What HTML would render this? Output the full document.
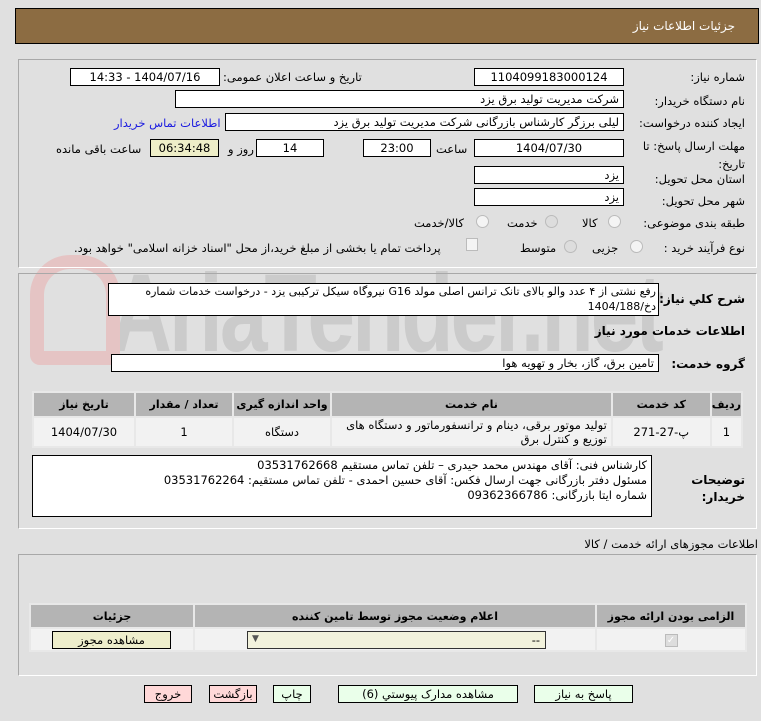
<!DOCTYPE html>
<html><head><meta charset="utf-8"><style>
*{box-sizing:border-box;margin:0;padding:0}
body{width:761px;height:721px;background:#e0e0e0;position:relative;overflow:hidden;font-family:"DejaVu Sans","Liberation Sans",sans-serif;font-size:11.5px;color:#000}
.a{position:absolute;white-space:nowrap}
.box{position:absolute;background:#fff;border:1px solid #000;direction:rtl;padding:0 4px;line-height:16px;overflow:hidden}
.c{text-align:center}
.l{direction:rtl}
.panel{position:absolute;left:18px;width:739px;border:1px solid #a8a8a8;border-right-color:#fff;border-bottom-color:#fff}
.b{font-weight:bold}
.rad{position:absolute;width:13px;height:13px;border-radius:50%;border:1px solid #bbb;background:#f4f4f4}
table{position:absolute;border-collapse:collapse;direction:rtl}
td,th{border:2px solid #e8e8e8;text-align:center}
th{background:#b4b4b4;font-weight:bold;font-size:11px}
td{background:#f2f2f2}
.btn{position:absolute;border:1px solid #000;background:#eaffea;text-align:center;line-height:16px;height:18px}
.pk{background:#ffd8d8}
</style></head><body>
<div class="a" style="left:15px;top:8px;width:744px;height:36px;background:#8c6c42;border:1px solid #000"></div>
<div class="a" style="right:26px;top:19px;color:#fff;font-size:12px">جزئیات اطلاعات نیاز</div>

<div class="a" style="left:110px;top:250px;font-size:110px;font-weight:bold;color:#cbcbcb;font-family:'Liberation Sans',sans-serif;letter-spacing:-4px;transform:scaleX(0.78);transform-origin:left">AriaTender.net</div>
<div class="a" style="left:30px;top:255px;width:90px;height:110px;border:14px solid #e5c4c4;border-radius:40px 40px 10px 10px"></div>

<div class="panel" style="top:59px;height:209px"></div>
<div class="a l" style="right:16px;top:70px">شماره نیاز:</div>
<div class="box c" style="left:474px;top:68px;width:150px;height:18px">1104099183000124</div>
<div class="a l" style="left:223px;top:70px">تاریخ و ساعت اعلان عمومی:</div>
<div class="box c" style="left:70px;top:68px;width:150px;height:18px">1404/07/16 - 14:33</div>
<div class="a l" style="right:16px;top:94px">نام دستگاه خریدار:</div>
<div class="box" style="left:175px;top:90px;width:449px;height:18px">شرکت مدیریت تولید برق یزد</div>
<div class="a l" style="right:16px;top:116px">ایجاد کننده درخواست:</div>
<div class="box" style="left:225px;top:113px;width:399px;height:18px">لیلی برزگر کارشناس بازرگانی شرکت مدیریت تولید برق یزد</div>
<div class="a l" style="left:114px;top:116px;color:#1a1ae0">اطلاعات تماس خریدار</div>
<div class="a l" style="right:16px;top:139px">مهلت ارسال پاسخ: تا</div>
<div class="a l" style="right:16px;top:157px">تاریخ:</div>
<div class="box c" style="left:474px;top:139px;width:150px;height:18px">1404/07/30</div>
<div class="a l" style="left:436px;top:142px">ساعت</div>
<div class="box c" style="left:363px;top:139px;width:68px;height:18px">23:00</div>
<div class="box c" style="left:256px;top:139px;width:68px;height:18px">14</div>
<div class="a l" style="left:228px;top:142px">روز و</div>
<div class="box c" style="left:150px;top:139px;width:69px;height:18px;background:#eeeec8">06:34:48</div>
<div class="a l" style="left:56px;top:142px">ساعت باقی مانده</div>
<div class="a l" style="right:16px;top:172px">استان محل تحویل:</div>
<div class="box" style="left:474px;top:166px;width:150px;height:18px">یزد</div>
<div class="a l" style="right:16px;top:194px">شهر محل تحویل:</div>
<div class="box" style="left:474px;top:188px;width:150px;height:18px">یزد</div>
<div class="a l" style="right:16px;top:216px">طبقه بندی موضوعی:</div>
<div class="rad" style="left:608px;top:215px"></div><div class="a" style="left:582px;top:216px">کالا</div>
<div class="rad" style="left:545px;top:215px;background:#ddd"></div><div class="a" style="left:507px;top:216px">خدمت</div>
<div class="rad" style="left:476px;top:215px"></div><div class="a" style="left:414px;top:216px">کالا/خدمت</div>
<div class="a l" style="right:16px;top:241px">نوع فرآیند خرید :</div>
<div class="rad" style="left:630px;top:240px"></div><div class="a" style="left:592px;top:241px">جزیی</div>
<div class="rad" style="left:564px;top:240px;background:#ddd"></div><div class="a" style="left:520px;top:241px">متوسط</div>
<div class="a" style="left:466px;top:238px;width:12px;height:13px;border:1px solid #bbb;background:#f4f4f4"></div>
<div class="a l" style="left:74px;top:241px">پرداخت تمام یا بخشی از مبلغ خرید،از محل "اسناد خزانه اسلامی" خواهد بود.</div>

<div class="panel" style="top:273px;height:256px"></div>
<div class="a l b" style="right:16px;top:292px;font-size:12px">شرح کلي نیاز:</div>
<div class="box" style="left:108px;top:283px;width:551px;height:33px;white-space:normal;line-height:15px;font-size:11px;padding:0 2px 0 20px">رفع نشتی از ۴ عدد والو بالای تانک ترانس اصلی مولد G16 نیروگاه سیکل ترکیبی یزد - درخواست خدمات شماره دخ/1404/188</div>
<div class="a l b" style="right:16px;top:324px;font-size:12px">اطلاعات خدمات مورد نیاز</div>
<div class="a l b" style="right:16px;top:357px;font-size:12px">گروه خدمت:</div>
<div class="box" style="left:111px;top:354px;width:548px;height:18px">تامین برق، گاز، بخار و تهویه هوا</div>
<table style="left:32px;top:391px;width:711px;height:56px">
<tr style="height:25px"><th style="width:28px">ردیف</th><th style="width:99px">کد خدمت</th><th>نام خدمت</th><th style="width:98px">واحد اندازه گیری</th><th style="width:98px">تعداد / مقدار</th><th style="width:102px">تاریخ نیاز</th></tr>
<tr><td>1</td><td>پ-27-271</td><td style="text-align:right;line-height:14px;padding:0 4px">تولید موتور برقی، دینام و ترانسفورماتور و دستگاه های توزیع و کنترل برق</td><td>دستگاه</td><td>1</td><td>1404/07/30</td></tr>
</table>
<div class="a l b" style="right:16px;top:473px;font-size:12px">توضیحات</div>
<div class="a l b" style="right:16px;top:490px;font-size:12px">خریدار:</div>
<div class="box" style="left:32px;top:455px;width:620px;height:62px;line-height:15px;padding-top:2px">کارشناس فنی: آقای مهندس محمد حیدری – تلفن تماس مستقیم 03531762668<br>مسئول دفتر بازرگانی جهت ارسال فکس: آقای حسین احمدی - تلفن تماس مستقیم: 03531762264<br>شماره ایتا بازرگانی: 09362366786</div>

<div class="a l" style="right:3px;top:537px">اطلاعات مجوزهای ارائه خدمت / کالا</div>
<div class="panel" style="top:554px;height:122px"></div>
<table style="left:29px;top:603px;width:718px;height:49px;border:2px solid #d8d8d8">
<tr style="height:24px"><th style="width:150px">الزامی بودن ارائه مجوز</th><th>اعلام وضعیت مجوز توسط تامین کننده</th><th style="width:164px">جزئیات</th></tr>
<tr><td><span style="display:inline-block;width:13px;height:13px;background:#ddd;border:1px solid #bbb;color:#fff;font-size:10px;line-height:12px">✓</span></td><td></td><td></td></tr>
</table>
<div class="a" style="left:247px;top:631px;width:299px;height:18px;border:1px solid #333;background:#f2f2dc"><span class="a" style="left:4px;top:2px;font-size:9px;color:#555">▼</span><span class="a" style="right:5px;top:1px">--</span></div>
<div class="btn" style="left:52px;top:631px;width:119px;background:#eeeecc">مشاهده مجوز</div>

<div class="btn" style="left:534px;top:685px;width:99px">پاسخ به نیاز</div>
<div class="btn" style="left:338px;top:685px;width:180px">مشاهده مدارک پیوستي (6)</div>
<div class="btn" style="left:273px;top:685px;width:38px">چاپ</div>
<div class="btn pk" style="left:209px;top:685px;width:48px">بازگشت</div>
<div class="btn pk" style="left:144px;top:685px;width:48px">خروج</div>
</body></html>
